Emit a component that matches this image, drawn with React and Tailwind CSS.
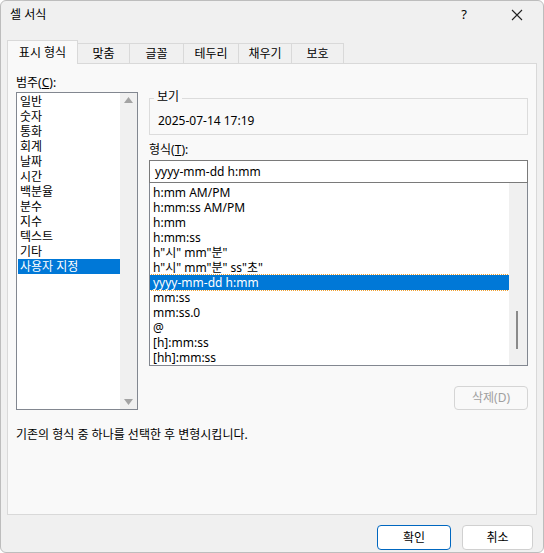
const font = { fontFamily: '"Noto Sans", "Noto Sans CJK KR", sans-serif' };

const tabs = ["표시 형식", "맞춤", "글꼴", "테두리", "채우기", "보호"];
const tabW = ["w-[71px]", "w-[52px]", "w-[54px]", "w-[55px]", "w-[53px]", "w-[52px]"];
const cats = ["일반", "숫자", "통화", "회계", "날짜", "시간", "백분율", "분수", "지수", "텍스트", "기타", "사용자 지정"];
const formats = ["h:mm AM/PM", "h:mm:ss AM/PM", "h:mm", "h:mm:ss", 'h"시" mm"분"', 'h"시" mm"분" ss"초"', "yyyy-mm-dd h:mm", "mm:ss", "mm:ss.0", "@", "[h]:mm:ss", "[hh]:mm:ss"];

export default function App() {
  return (
    <div style={font} className="w-[544px] h-[553px] bg-[#f0f0f0] text-[12px] text-black overflow-hidden rounded-[6px] border border-[#bdbdbd] flex flex-col">
      <div className="h-[28px] flex items-center pl-[9px] shrink-0">
        <span className="flex-1 text-[12px]">셀 서식</span>
        <span className="w-[30px] text-center text-[13px]">?</span>
        <svg width="12" height="12" viewBox="0 0 12 12" className="ml-[32px] mr-[20px]"><path d="M1 1L11 11M11 1L1 11" stroke="#222" strokeWidth="1.1" /></svg>
      </div>
      <div className="flex items-end pl-[6px] h-[34px] shrink-0">
        {tabs.map((t, i) => (
          <div key={t} className={`${tabW[i]} flex items-center justify-center border border-[#d9d9d9] ${i === 0 ? "h-[24px] bg-[#f9f9f9] border-b-0 relative top-[1px]" : "h-[20px] bg-[#f0f0f0] border-l-0 border-b-0"}`}>{t}</div>
        ))}
      </div>
      <div className="mx-[6px] h-[452px] bg-[#f9f9f9] border border-[#d9d9d9] px-[8px] pt-[10px] flex flex-col">
        <div className="flex gap-[11px]">
          <div className="w-[122px] shrink-0">
            <div className="h-[18px]">범주(<u>C</u>):</div>
            <div className="h-[318px] bg-white border border-[#828790] flex">
              <div className="flex-1 pt-[1px] pl-[1px] overflow-hidden">
                {cats.map((c, i) => (
                  <div key={c} className={`h-[15px] leading-[15px] pl-[2px] overflow-hidden ${i === 11 ? "bg-[#0078d7] text-white" : ""}`}>{c}</div>
                ))}
              </div>
              <div className="w-[17px] bg-[#f0f0f0] flex flex-col justify-between items-center py-[4px]">
                <svg width="9" height="6" viewBox="0 0 9 6"><path d="M0 6L4.5 0L9 6Z" fill="#a3a3a3" /></svg>
                <svg width="9" height="6" viewBox="0 0 9 6"><path d="M0 0L4.5 6L9 0Z" fill="#a3a3a3" /></svg>
              </div>
            </div>
          </div>
          <div className="flex-1 flex flex-col">
            <div className="relative mt-[24px] h-[37px] border border-[#dcdcdc]">
              <span className="absolute -top-[10px] left-[4px] bg-[#f9f9f9] px-[3px] leading-[16px]">보기</span>
              <div className="pt-[14px] pl-[8px] leading-[16px]">2025-07-14 17:19</div>
            </div>
            <div className="mt-[6px] h-[19px]">형식(<u>T</u>):</div>
            <div className="h-[23px] bg-white border border-[#7a7a7a] px-[5px] flex items-center">yyyy-mm-dd h:mm</div>
            <div className="h-[183px] bg-white border border-[#828790] border-t-0 flex">
              <div className="flex-1 pt-[2px] overflow-hidden">
                {formats.map((f, i) => (
                  <div key={f} className={`h-[15px] leading-[15px] pl-[3px] overflow-hidden ${i === 6 ? "bg-[#0078d7] text-white outline outline-1 outline-dotted outline-[#f0a030]" : ""}`}>{f}</div>
                ))}
              </div>
              <div className="w-[18px] bg-[#f0f0f0] relative">
                <div className="absolute left-[7px] top-[128px] w-[2px] h-[38px] bg-[#8a8a8a]" />
              </div>
            </div>
            <div className="flex justify-end mt-[20px]">
              <div className="w-[74px] h-[24px] border border-[#d5d5d5] rounded-[4px] bg-[#f9f9f9] text-[#a0a0a0] flex items-center justify-center">삭제(D)</div>
            </div>
          </div>
        </div>
        <div className="mt-[16px]">기존의 형식 중 하나를 선택한 후 변형시킵니다.</div>
      </div>
      <div className="flex justify-end gap-[11px] pr-[10px] mt-[10px]">
        <div className="w-[74px] h-[25px] border border-[#0067c0] rounded-[4px] bg-white flex items-center justify-center">확인</div>
        <div className="w-[71px] h-[25px] border border-[#d0d0d0] rounded-[4px] bg-white flex items-center justify-center">취소</div>
      </div>
    </div>
  );
}
